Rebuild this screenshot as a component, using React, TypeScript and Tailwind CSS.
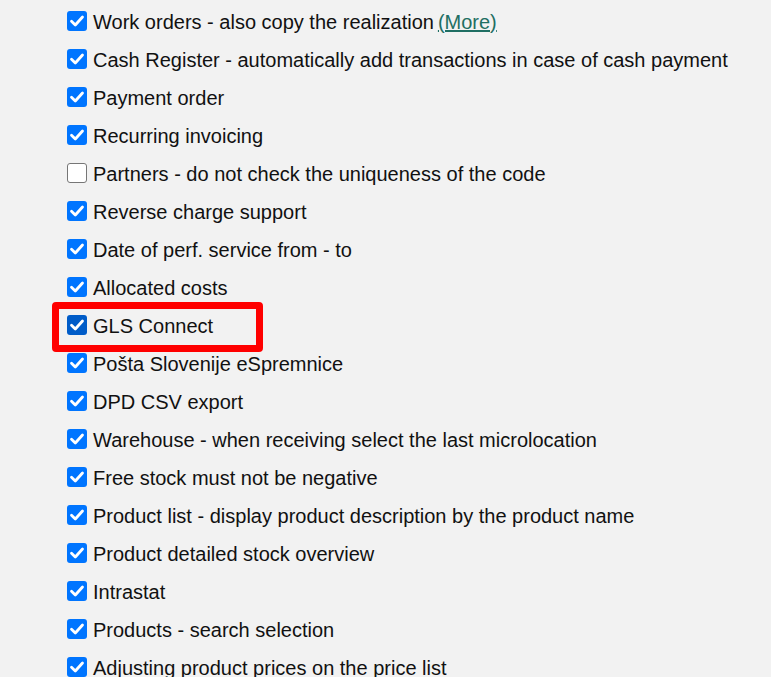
import React from "react";

const items: { label: string; checked: boolean; more?: boolean; highlight?: boolean }[] = [
  { label: "Work orders - also copy the realization", checked: true, more: true },
  { label: "Cash Register - automatically add transactions in case of cash payment", checked: true },
  { label: "Payment order", checked: true },
  { label: "Recurring invoicing", checked: true },
  { label: "Partners - do not check the uniqueness of the code", checked: false },
  { label: "Reverse charge support", checked: true },
  { label: "Date of perf. service from - to", checked: true },
  { label: "Allocated costs", checked: true },
  { label: "GLS Connect", checked: true, highlight: true },
  { label: "Pošta Slovenije eSpremnice", checked: true },
  { label: "DPD CSV export", checked: true },
  { label: "Warehouse - when receiving select the last microlocation", checked: true },
  { label: "Free stock must not be negative", checked: true },
  { label: "Product list - display product description by the product name", checked: true },
  { label: "Product detailed stock overview", checked: true },
  { label: "Intrastat", checked: true },
  { label: "Products - search selection", checked: true },
  { label: "Adjusting product prices on the price list", checked: true },
];

function Box({ checked, dark }: { checked: boolean; dark?: boolean }) {
  if (!checked) {
    return <span className="block w-[20px] h-[20px] shrink-0 rounded-[3px] border border-[#767676] bg-white" />;
  }
  return (
    <span
      className={`flex w-[20px] h-[20px] shrink-0 items-center justify-center rounded-[3px] ${
        dark ? "bg-[#005cc8]" : "bg-[#0075ff]"
      }`}
    >
      <svg width="20" height="20" viewBox="0 0 20 20" fill="none">
        <path d="M4.5 10.2 L8.3 14 L15.5 6" stroke="white" strokeWidth="2.8" strokeLinecap="round" strokeLinejoin="round" />
      </svg>
    </span>
  );
}

export default function App() {
  return (
    <div
      className="w-[771px] h-[677px] overflow-hidden bg-[#f2f2f2] pt-[2px] pl-[67px] text-[20px] text-[#111]"
      style={{ fontFamily: '"Liberation Sans", Arial, sans-serif' }}
    >
      {items.map((it) => (
        <div key={it.label} className="relative flex h-[38px] items-center gap-[6px] whitespace-nowrap">
          {it.highlight && (
            <span className="absolute left-[-15px] top-[-4px] h-[50px] w-[211px] rounded-[4px] border-[7px] border-[#ff0000]" />
          )}
          <Box checked={it.checked} dark={it.highlight} />
          <span className="leading-none pt-[1px]">
            {it.label}
            {it.more && <a className="ml-[4px] text-[#1f6f63] underline">(More)</a>}
          </span>
        </div>
      ))}
    </div>
  );
}
